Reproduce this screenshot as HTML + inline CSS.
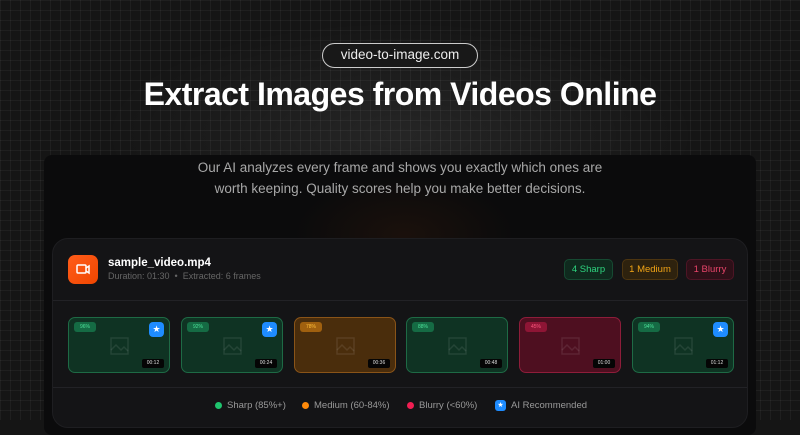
<!DOCTYPE html>
<html><head><meta charset="utf-8"><style>
*{margin:0;padding:0;box-sizing:border-box}
body{width:800px;height:420px;overflow:hidden;background:#151515;font-family:"Liberation Sans",sans-serif;position:relative}
.grid{position:absolute;inset:0;background-image:linear-gradient(rgba(255,255,255,.045) 1px,transparent 1px),linear-gradient(90deg,rgba(255,255,255,.045) 1px,transparent 1px);background-size:10px 10px}
.glow{position:absolute;left:100px;top:20px;width:600px;height:230px;background:radial-gradient(ellipse at center,rgba(255,255,255,.07),transparent 70%)}
.pill{position:absolute;left:322px;top:43px;width:156px;height:25px;border:1.5px solid #ccc;border-radius:13px;color:#eee;font-size:13.5px;text-align:center;line-height:22px;background:#181818}
h1{position:absolute;top:76px;left:0;width:800px;text-align:center;color:#fff;font-size:32px;font-weight:bold;letter-spacing:-0.5px}
.panel{position:absolute;left:44px;top:155px;width:712px;height:280px;background:#0b0b0c;border-radius:8px;overflow:hidden}
.panel .og{position:absolute;left:250px;top:20px;width:220px;height:120px;background:radial-gradient(ellipse,rgba(120,50,10,.14),transparent 70%)}
.desc{position:absolute;top:157px;left:0;width:800px;text-align:center;color:#a8a8a8;font-size:13.5px;line-height:21px}
.card{position:absolute;left:52px;top:238px;width:696px;height:190px;background:#141416;border-radius:16px;border:1px solid #1e1e21}
.ic{position:absolute;left:15px;top:16px;width:30px;height:29px;border-radius:7px;background:linear-gradient(135deg,#ff5d1a,#f04600)}
.t1{position:absolute;left:55px;top:18px;color:#fff;font-weight:bold;font-size:11.5px}
.t2{position:absolute;left:55px;top:32px;color:#666;font-size:9px}
.b{position:absolute;top:20px;height:21px;border-radius:5px;font-size:9.5px;line-height:19px;text-align:center}
.hr{position:absolute;left:0;right:0;height:1px;background:#222226}
.f{position:absolute;top:78px;width:102px;height:56px;border-radius:7px;border:1px solid}
.g{background:#0f3323;border-color:#1e6a45}
.o{background:#4a2d0c;border-color:#8a5418}
.r{background:#4e0f20;border-color:#8e1d3a}
.pc{position:absolute;left:5px;top:4px;width:22px;height:10px;border-radius:3px;font-size:5px;line-height:10px;text-align:center}
.g .pc{background:#156b44;color:#4de29a}.o .pc{background:#a0600f;color:#ffbf3a}.r .pc{background:#8e1535;color:#ff5a80}
.st{position:absolute;right:5px;top:4px;width:15px;height:15px;border-radius:4px;background:#1e8cff;color:#fff;font-size:9px;line-height:15px;text-align:center}
.tm{position:absolute;right:5px;bottom:4px;width:22px;height:9px;background:#050505;color:#ddd;font-size:5px;line-height:9px;text-align:center;border-radius:2px}
.im{position:absolute;left:41px;top:19px}
.lg{position:absolute;top:161px;font-size:9.5px;color:#999;display:flex;align-items:center}
.dot{width:7px;height:7px;border-radius:50%;margin-right:5px}
</style></head><body>
<div class="grid"></div><div class="glow"></div>
<div class="pill">video-to-image.com</div>
<h1>Extract Images from Videos Online</h1>
<div class="panel"><div class="og"></div></div>
<div class="desc">Our AI analyzes every frame and shows you exactly which ones are<br>worth keeping. Quality scores help you make better decisions.</div>
<div class="card">
<div class="ic"><svg width="30" height="29" viewBox="0 0 30 29"><rect x="9" y="10" width="9" height="8" rx="1" fill="none" stroke="#fff" stroke-width="1.5"/><path d="M18 13l3-2v7l-3-2" fill="none" stroke="#fff" stroke-width="1.5"/></svg></div>
<div class="t1">sample_video.mp4</div>
<div class="t2">Duration: 01:30 &nbsp;•&nbsp; Extracted: 6 frames</div>
<div class="b" style="left:511px;width:49px;background:#0f2a1e;border:1px solid #164a32;color:#2ed47f">4 Sharp</div>
<div class="b" style="left:569px;width:56px;background:#2e220e;border:1px solid #4d3510;color:#f2a516">1 Medium</div>
<div class="b" style="left:633px;width:48px;background:#2e1018;border:1px solid #4e1525;color:#e8456a">1 Blurry</div>
<div class="hr" style="top:61px"></div>
<div class="f g" style="left:15px"><div class="pc">96%</div><div class="st">★</div><svg class="im" width="19" height="18"><rect x="1" y="1" width="17" height="16" fill="none" stroke="rgba(255,255,255,.09)" stroke-width="1.5"/><path d="M1 13l5-5 5 5 3-3 4 4" fill="none" stroke="rgba(255,255,255,.09)" stroke-width="1.5"/></svg><div class="tm">00:12</div></div>
<div class="f g" style="left:128px"><div class="pc">92%</div><div class="st">★</div><svg class="im" width="19" height="18"><rect x="1" y="1" width="17" height="16" fill="none" stroke="rgba(255,255,255,.09)" stroke-width="1.5"/><path d="M1 13l5-5 5 5 3-3 4 4" fill="none" stroke="rgba(255,255,255,.09)" stroke-width="1.5"/></svg><div class="tm">00:24</div></div>
<div class="f o" style="left:241px"><div class="pc">78%</div><svg class="im" width="19" height="18"><rect x="1" y="1" width="17" height="16" fill="none" stroke="rgba(255,255,255,.09)" stroke-width="1.5"/><path d="M1 13l5-5 5 5 3-3 4 4" fill="none" stroke="rgba(255,255,255,.09)" stroke-width="1.5"/></svg><div class="tm">00:36</div></div>
<div class="f g" style="left:353px"><div class="pc">88%</div><svg class="im" width="19" height="18"><rect x="1" y="1" width="17" height="16" fill="none" stroke="rgba(255,255,255,.09)" stroke-width="1.5"/><path d="M1 13l5-5 5 5 3-3 4 4" fill="none" stroke="rgba(255,255,255,.09)" stroke-width="1.5"/></svg><div class="tm">00:48</div></div>
<div class="f r" style="left:466px"><div class="pc">45%</div><svg class="im" width="19" height="18"><rect x="1" y="1" width="17" height="16" fill="none" stroke="rgba(255,255,255,.09)" stroke-width="1.5"/><path d="M1 13l5-5 5 5 3-3 4 4" fill="none" stroke="rgba(255,255,255,.09)" stroke-width="1.5"/></svg><div class="tm">01:00</div></div>
<div class="f g" style="left:579px"><div class="pc">94%</div><div class="st">★</div><svg class="im" width="19" height="18"><rect x="1" y="1" width="17" height="16" fill="none" stroke="rgba(255,255,255,.09)" stroke-width="1.5"/><path d="M1 13l5-5 5 5 3-3 4 4" fill="none" stroke="rgba(255,255,255,.09)" stroke-width="1.5"/></svg><div class="tm">01:12</div></div>
<div class="hr" style="top:148px"></div>
<div class="lg" style="left:162px"><span class="dot" style="background:#1fc46e"></span>Sharp (85%+)</div>
<div class="lg" style="left:249px"><span class="dot" style="background:#ff8a0a"></span>Medium (60-84%)</div>
<div class="lg" style="left:354px"><span class="dot" style="background:#f01e52"></span>Blurry (&lt;60%)</div>
<div class="lg" style="left:442px"><span style="width:11px;height:11px;border-radius:3px;background:#1e8cff;color:#fff;font-size:7px;line-height:11px;text-align:center;margin-right:5px">★</span>AI Recommended</div>
</div>
</body></html>
